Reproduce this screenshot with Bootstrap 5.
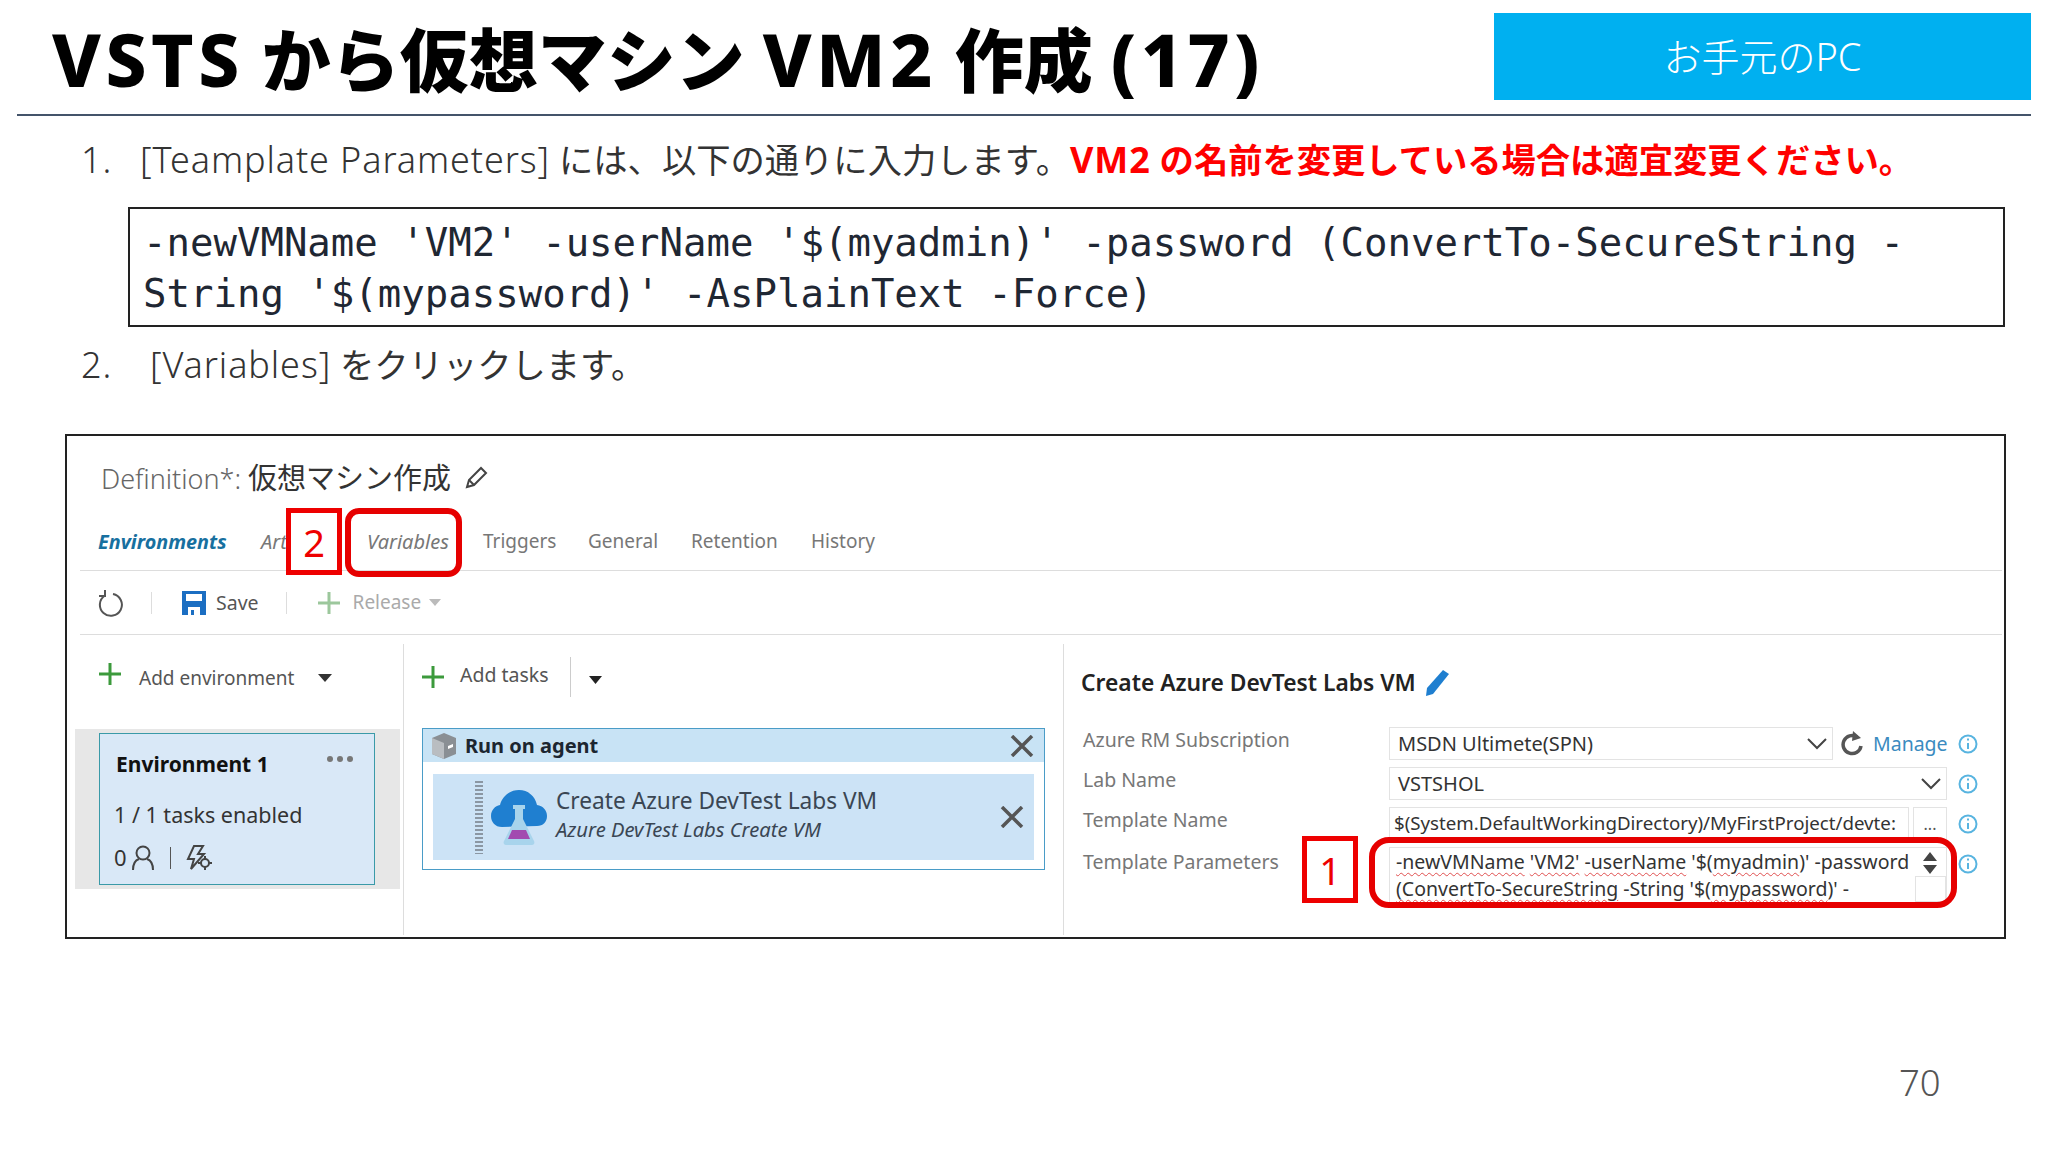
<!DOCTYPE html>
<html lang="ja">
<head>
<meta charset="utf-8">
<title>VSTS から仮想マシン VM2 作成 (17)</title>
<link href="https://cdn.jsdelivr.net/npm/bootstrap@5.3.0/dist/css/bootstrap.min.css" rel="stylesheet">
<style>
html,body{margin:0;background:#fff}
body{font-family:"Noto Sans","Noto Sans CJK JP",sans-serif;color:#333}
.slide{width:2048px;height:1152px;position:relative;overflow:hidden;background:#fff}
.head{height:116px;margin:0 17px;border-bottom:2px solid #44546a;padding-left:35px}
.head-title{font-size:69px;font-weight:900;color:#000;line-height:1;margin:0;padding-top:22px;font-family:"Noto Sans","Noto Sans CJK JP",sans-serif;white-space:nowrap}
.head-title .lat{font-size:73px;letter-spacing:4.500px;font-weight:800}
.head-tag{width:537px;height:87px;margin-top:13px;background:#00b0f0;color:#fff;font-size:38px;font-weight:300}
.step{font-size:34.300px;line-height:46px;color:#333;font-weight:400;margin-left:81px;white-space:nowrap}
.step .lat{font-size:36px;letter-spacing:.9px;font-weight:300}
.step .warn .lat{font-weight:700}
.step-num{width:59px}
.step-num.wide{width:69px}
.step-one{margin-top:21px}
.warn{color:#f00;font-weight:700}
.code-box{margin:24px 0 0 128px;width:1877px;height:120px;border:2px solid #222;padding:8px 13px 0;font:39px/51px "DejaVu Sans Mono","Liberation Mono",monospace;color:#1f2733;white-space:pre}
.step-two{margin-top:15px}
.shot{position:relative;width:1941px;height:505px;margin:46px 0 0 65px;border:2px solid #222;font-family:"Noto Sans","Noto Sans CJK JP",sans-serif}
.def-row{height:85px;padding-left:34px;font-size:27px;font-weight:300;color:#666;padding-bottom:2px}
.def-row b{font-weight:400;color:#333;font-size:29px}
.tab-row{height:50px;margin:0 2px 0 13px;border-bottom:1px solid #ddd;padding:0 0 8px 18px;font-size:19px;color:#777}
.tab-row .on{font-weight:700;font-style:italic;color:#17709f;font-size:19.800px;width:163px}
.tab-row em{color:#777;font-size:20px}
.tab-a{width:106px}
.tab-v{width:116px}
.tab-t{width:105px}
.tab-g{width:103px}
.tab-r{width:120px}
.tool-row{height:64px;margin:0 2px 0 13px;border-bottom:1px solid #ddd;padding-left:18px;font-size:19.5px;color:#555}
.tool-sep{width:1px;height:22px;background:#ddd}
.sep-1{margin:0 29px 0 27px}
.sep-2{margin:0 31px 0 27px}
.lbl-save{margin-left:9px}
.lbl-rel{margin-left:13px;font-size:19px}
.faded{color:#aaa}
.panes{margin:9px 0 0 1px;height:291px}
.pane-a{width:336px;border-right:1px solid #ddd}
.pane-b{width:660px;border-right:1px solid #ddd;padding:0 18px}
.pane-c{flex:1;padding-left:17px;min-width:0}
.add-row{height:66px;font-size:19px;color:#555}
.add-a{height:68px;padding-left:30px}
.add-a svg:first-child{margin-top:-8px}
.add-a span{margin-left:17px}
.add-a svg:last-child{margin-left:24px}
.add-b{font-size:19.5px}
.add-b span:nth-child(2){margin:-5px 0 0 16px}
.add-b .tool-sep{height:40px;background:#ccc;margin:0 0 0 21px}
.add-b svg:last-child{margin:6px 0 0 18px}
.env-band{width:325px;height:160px;margin:17px 0 0 7px;background:#e7e7e7;padding:4px 25px 4px 24px}
.env-card{height:100%;background:#d9e8f7;border:1px solid #3a9aa8;padding:0 20px 0 14px;color:#333}
.env-name{font-size:21px;font-weight:700;color:#111;height:66px;padding:15px 0 0 2px}
.env-name svg{margin-top:6px}
.env-meta{font-size:21.500px;line-height:30px;font-weight:400}
.env-stat{font-size:22px;margin-top:11px}
.stat-sep{background:#555;margin:0 15px}
.run-box{height:142px;margin-top:18px;border:1px solid #4a9cc7;background:#fff}
.run-head{height:33px;background:#c8e3f5;padding:0 10px 0 8px;font-size:20px;font-weight:700;color:#1c2630}
.run-task{height:86px;margin:12px 10px 0;background:#cce3f6;padding:6px 10px 6px 42px}
.grip{width:8px;height:73px;background:repeating-linear-gradient(#8b97a3 0 2px,transparent 2px 4px);flex:none}
.task-text{margin:-9px 0 0 9px}
.task-title{font-size:22.700px;line-height:32px;color:#3a4653;font-weight:400}
.task-sub{font-size:20.200px;line-height:24px;font-style:italic;color:#3a4653}
.task-head{height:83px;font-size:22.800px;font-weight:600;color:#222;padding-bottom:5px}
.f-row{height:33px;margin-bottom:7px;font-size:19.5px;color:#777}
.f-label{width:308px;padding:0 0 8px 2px;flex:none}
.f-box{height:33px;border:1px solid #e3e3e3;color:#333;padding:0 8px;background:#fff;white-space:nowrap;overflow:hidden;font-size:20px}
.chev-box{padding-right:4px}
.w1{width:444px}
.w2{width:558px}
.w3{width:520px;padding:0 4px;font-size:18.700px}
.dots{width:34px;height:33px;margin-left:4px;border:1px solid #e3e3e3;font-size:16px;color:#555}
.link-manage{color:#3b8bc0;font-size:19.500px;margin-left:10px;width:85px}
.ico-i{margin-left:11px;flex:none}
.ta-row{height:56px;font-size:19.5px;color:#777;margin-top:6px}
.ta-row .ico-i{margin-top:7px}
.ta-box{width:558px;height:56px;padding:0 6px;color:#333;font-size:19.500px;line-height:27px;white-space:nowrap;border:1px solid #e3e3e3;position:relative}
.sq{text-decoration:underline wavy #e05050 1px;text-underline-offset:3px}
.stepper{position:absolute;right:7px;top:3px}
.ta-corner{position:absolute;right:0;bottom:0;width:31px;height:26px;border:1px solid #e3e3e3;background:#fff}
.note-num{position:absolute;background:#fff;border:5px solid #e00;color:#e00;font-family:"Noto Sans",sans-serif;font-size:38px;line-height:1}
.note-2{left:219px;top:72px;width:56px;height:67px}
.note-1{left:1235px;top:400px;width:56px;height:67px}
.note-ring{position:absolute;border:6px solid #e60000;border-radius:14px}
.ring-2{left:278px;top:72px;width:117px;height:69px}
.ring-1{left:1302px;top:401px;width:588px;height:71px;border-radius:20px}
.page-no{position:absolute;left:1899px;top:1059px;font-size:36.500px;font-weight:300;color:#555;line-height:46px}
</style>
</head>
<body>
<div class="slide">
  <header class="head d-flex">
    <h1 class="head-title"><span class="lat">VSTS</span> から仮想マシン <span class="lat">VM2</span> 作成 <span class="lat">(17)</span></h1>
    <div class="head-tag ms-auto d-flex align-items-center justify-content-center">お手元のPC</div>
  </header>

  <div class="step step-one d-flex"><span class="step-num lat">1.</span><span><span class="lat">[Teamplate Parameters]</span> には、以下の通りに入力します。<span class="warn"><span class="lat">VM2</span> の名前を変更している場合は適宜変更ください。</span></span></div>
  <div class="code-box">-newVMName 'VM2' -userName '$(myadmin)' -password (ConvertTo-SecureString -
String '$(mypassword)' -AsPlainText -Force)</div>
  <div class="step step-two d-flex"><span class="step-num wide lat">2.</span><span><span class="lat">[Variables]</span> をクリックします。</span></div>

  <section class="shot">
    <div class="def-row d-flex align-items-center gap-2"><span>Definition*: <b>仮想マシン作成</b></span>
      <svg class="ms-1" width="26" height="26" viewBox="0 0 26 26" fill="none" stroke="#444" stroke-width="2"><path d="M4 22l2-7L18 3l5 5L11 20z"/><path d="M6 15l5 5"/></svg>
    </div>
    <nav class="tab-row d-flex align-items-center">
      <span class="on">Environments</span><em class="tab-a">Artifacts</em><em class="tab-v">Variables</em><span class="tab-t">Triggers</span><span class="tab-g">General</span><span class="tab-r">Retention</span><span>History</span>
    </nav>
    <div class="tool-row d-flex align-items-center">
      <svg width="26" height="28" viewBox="0 0 26 28" fill="none" stroke="#555" stroke-width="2"><path d="M7 6.500A11 11 0 1 0 15 5"/><path d="M8 1v6H2" transform="translate(-1 0)"/></svg>
      <span class="tool-sep sep-1"></span>
      <svg width="26" height="26" viewBox="0 0 26 26"><path fill="#1b6ec2" d="M1 1h24v24H1z"/><path fill="#fff" d="M5 4h16v7H5zM7 17h12v8H7z"/><path fill="#1b6ec2" d="M10 20h3v5h-3z"/></svg>
      <span class="lbl-save">Save</span>
      <span class="tool-sep sep-2"></span>
      <svg width="22" height="22" viewBox="0 0 22 22" stroke="#9cc79c" stroke-width="3"><path d="M11 0v22M0 11h22"/></svg>
      <span class="faded lbl-rel">Release</span>
      <svg class="ms-2" width="12" height="8" viewBox="0 0 12 8"><path fill="#bbb" d="M0 0h12L6 7z"/></svg>
    </div>
    <div class="panes d-flex">
      <div class="pane-a">
        <div class="add-row add-a d-flex align-items-center">
          <svg width="24" height="24" viewBox="0 0 24 24" stroke="#3c9a3c" stroke-width="3"><path d="M12 1v22M1 12h22"/></svg>
          <span>Add environment</span>
          <svg width="14" height="9" viewBox="0 0 14 9"><path fill="#333" d="M0 0h14L7 8z"/></svg>
        </div>
        <div class="env-band">
          <div class="env-card">
            <div class="env-name d-flex justify-content-between"><span>Environment 1</span>
              <svg width="28" height="8" viewBox="0 0 28 8" fill="#777"><circle cx="4" cy="4" r="3"/><circle cx="14" cy="4" r="3"/><circle cx="24" cy="4" r="3"/></svg>
            </div>
            <div class="env-meta">1 / 1 tasks enabled</div>
            <div class="env-stat d-flex align-items-center">0
              <svg class="ms-1" width="24" height="26" viewBox="0 0 24 26" fill="none" stroke="#444" stroke-width="2"><circle cx="12" cy="8" r="6.500"/><path d="M2 25c0-7 3-10 6-11M22 25c0-7-3-10-6-11"/></svg>
              <span class="tool-sep stat-sep"></span>
              <svg width="26" height="26" viewBox="0 0 26 26" fill="none" stroke="#444" stroke-width="2"><path d="M8 1h9l-5 8h6L5 24l3-10H2z"/><circle cx="19" cy="18" r="4"/><path d="M19 11v3M19 22v3M12 18h3M23 18h3"/></svg>
            </div>
          </div>
        </div>
      </div>
      <div class="pane-b">
        <div class="add-row add-b d-flex align-items-center">
          <svg width="22" height="22" viewBox="0 0 22 22" stroke="#3c9a3c" stroke-width="3"><path d="M11 0v22M0 11h22"/></svg>
          <span>Add tasks</span>
          <span class="tool-sep"></span>
          <svg width="13" height="8" viewBox="0 0 13 8"><path fill="#222" d="M0 0h13L6.500 8z"/></svg>
        </div>
        <div class="run-box">
          <div class="run-head d-flex align-items-center">
            <svg width="26" height="28" viewBox="0 0 26 28"><path fill="#8a8f94" d="M1 6l12-5 12 5v16l-12 5-12-5z"/><path fill="#b9bdc1" d="M1 6l12 5v16L1 22z"/><path fill="#fff" d="M17 14l5-2v3l-5 2z"/></svg>
            <span class="ms-2">Run on agent</span>
            <svg class="ms-auto" width="24" height="22" viewBox="0 0 24 22" stroke="#555" stroke-width="3.500"><path d="M2 1l20 20M22 1L2 21"/></svg>
          </div>
          <div class="run-task d-flex align-items-center">
            <span class="grip"></span>
            <svg class="ms-2" width="56" height="56" viewBox="0 0 56 56"><path fill="#1f7fd0" d="M11 38C4 38 0 33 0 27s4-10 9-11C11 7 19 1 28 1c9 0 16 6 18 15 6 1 10 5 10 11s-4 10-10 10z"/><path fill="#a8d4ec" d="M22 16h12v4h-2v10l11 22c1 2 0 4-2 4H15c-2 0-3-2-2-4l11-22V20h-2z"/><path fill="#a24bb0" d="M21 41h14l4 9H17z"/></svg>
            <div class="task-text"><div class="task-title">Create Azure DevTest Labs VM</div><div class="task-sub">Azure DevTest Labs Create VM</div></div>
            <svg class="ms-auto" width="24" height="22" viewBox="0 0 24 22" stroke="#555" stroke-width="3.500"><path d="M2 1l20 20M22 1L2 21"/></svg>
          </div>
        </div>
      </div>
      <div class="pane-c">
        <div class="task-head d-flex align-items-center gap-2"><span>Create Azure DevTest Labs VM</span>
          <svg width="26" height="28" viewBox="0 0 26 28"><path fill="#1f7fd0" d="M19 1l6 4L9 25l-7 2 1-8z"/></svg>
        </div>
        <div class="f-row d-flex align-items-center"><span class="f-label">Azure RM Subscription</span>
          <div class="f-box chev-box w1 d-flex align-items-center justify-content-between"><span>MSDN Ultimete(SPN)</span>
            <svg width="22" height="13" viewBox="0 0 22 13" fill="none" stroke="#444" stroke-width="2"><path d="M2 2l9 9 9-9"/></svg></div>
          <svg class="ms-2" width="22" height="26" viewBox="0 0 22 26" fill="none" stroke="#555" stroke-width="3.500"><path d="M16 6a9 9 0 1 0 4 9"/><path fill="#555" stroke="none" d="M12 0l8 7-9 3z"/></svg>
          <span class="link-manage">Manage</span>
          <svg width="20" height="20" viewBox="0 0 20 20" fill="none" stroke="#58b4e0" stroke-width="2"><circle cx="10" cy="10" r="8.500"/><path d="M10 9v6M10 4.500v2"/></svg>
        </div>
        <div class="f-row d-flex align-items-center"><span class="f-label">Lab Name</span>
          <div class="f-box chev-box w2 d-flex align-items-center justify-content-between"><span>VSTSHOL</span>
            <svg width="22" height="13" viewBox="0 0 22 13" fill="none" stroke="#444" stroke-width="2"><path d="M2 2l9 9 9-9"/></svg></div>
          <svg class="ico-i" width="20" height="20" viewBox="0 0 20 20" fill="none" stroke="#58b4e0" stroke-width="2"><circle cx="10" cy="10" r="8.500"/><path d="M10 9v6M10 4.500v2"/></svg>
        </div>
        <div class="f-row d-flex align-items-center"><span class="f-label">Template Name</span>
          <div class="f-box w3 d-flex align-items-center">$(System.DefaultWorkingDirectory)/MyFirstProject/devte:</div>
          <span class="dots d-flex align-items-center justify-content-center">...</span>
          <svg class="ico-i" width="20" height="20" viewBox="0 0 20 20" fill="none" stroke="#58b4e0" stroke-width="2"><circle cx="10" cy="10" r="8.500"/><path d="M10 9v6M10 4.500v2"/></svg>
        </div>
        <div class="ta-row d-flex"><span class="f-label">Template Parameters</span>
          <div class="ta-box"><span class="sq">-newVMName</span> <span class="sq">'VM2'</span> <span class="sq">-userName</span> '$(<span class="sq">myadmin</span>)' -password<br><span class="sq">(ConvertTo-SecureString</span> -String '$(<span class="sq">mypassword</span>)' -
            <svg class="stepper" width="18" height="24" viewBox="0 0 18 24" fill="#444"><path d="M9 1l7 9H2zM9 23l7-9H2z"/></svg><span class="ta-corner"></span></div>
          <svg class="ico-i" width="20" height="20" viewBox="0 0 20 20" fill="none" stroke="#58b4e0" stroke-width="2"><circle cx="10" cy="10" r="8.500"/><path d="M10 9v6M10 4.500v2"/></svg>
        </div>
      </div>
    </div>
    <div class="note-num note-2 d-flex align-items-center justify-content-center">2</div>
    <div class="note-ring ring-2"></div>
    <div class="note-num note-1 d-flex align-items-center justify-content-center">1</div>
    <div class="note-ring ring-1"></div>
  </section>
  <div class="page-no">70</div>
</div>
<script src="https://cdn.jsdelivr.net/npm/bootstrap@5.3.0/dist/js/bootstrap.bundle.min.js"></script>
</body>
</html>
